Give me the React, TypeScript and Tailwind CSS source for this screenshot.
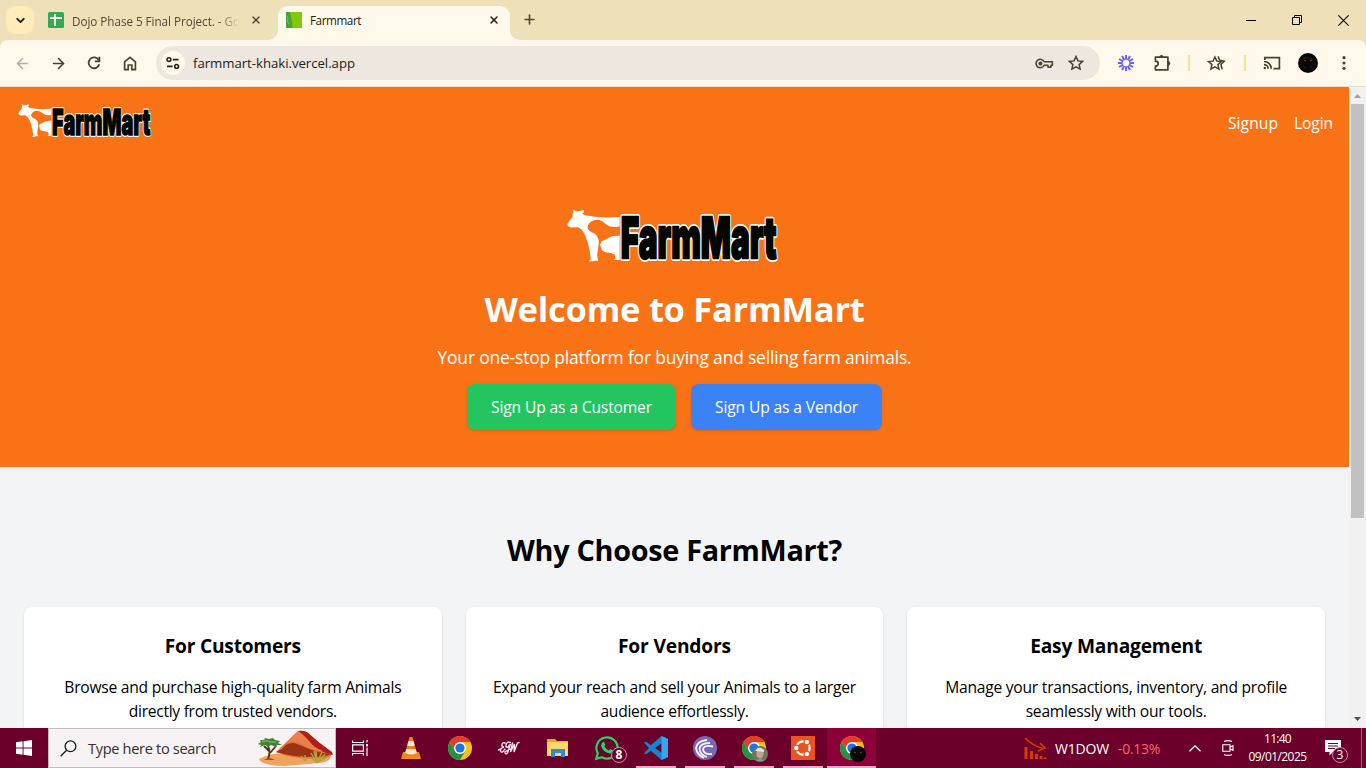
import React, { useLayoutEffect, useRef, useState } from "react";
import { ChevronDown, X, Plus, ArrowLeft, ArrowRight } from "lucide-react";

/* Single line of text whose tracking is adjusted so that it spans `w` pixels. */
function Line({ children, w, className = "" }: { children: string; w: number; className?: string }) {
  const ref = useRef<HTMLSpanElement>(null);
  const [spacing, setSpacing] = useState(0);
  useLayoutEffect(() => {
    if (ref.current) {
      const natural = ref.current.getBoundingClientRect().width;
      setSpacing((w - natural) / children.length);
    }
  }, [w, children]);
  return (
    <span ref={ref} className={`inline-block whitespace-nowrap ${className}`} style={{ letterSpacing: spacing }}>
      {children}
    </span>
  );
}

function Logo({ className }: { className: string }) {
  return (
    <svg viewBox="45 38 642 166" className={`overflow-visible ${className}`}>
      <g fill="#fffdfa">
        <path d="M66 42 L72 48 L84 47 L97 43 L97 50 L92 56 L101 60 Q130 66 160 67 L205 65 V93 Q180 100 165 88 Q145 68 125 76 Q108 84 108 98 Q112 108 128 114 Q142 124 142 142 Q140 165 137 180 L140 197 H128 L126 199 H112 L118 192 L114 165 Q108 135 98 115 Q90 100 80 96 L58 97 L48 92 V84 L62 66 Z" />
        <path d="M205 122 Q180 120 165 132 L150 138 L146 150 L152 166 Q160 173 175 173 L190 178 L192 190 L186 195 H205 Z" />
      </g>
      <g fontFamily="Inter, 'Liberation Sans', sans-serif" fontWeight="900" fontSize="170" strokeLinejoin="round">
        <text x="208" y="190" textLength="471" lengthAdjust="spacingAndGlyphs" fill="#fff" stroke="#fffdf8" strokeWidth="18">FarmMart</text>
        <text x="208" y="190" textLength="471" lengthAdjust="spacingAndGlyphs" fill="#030500" stroke="#030500" strokeWidth="7" strokeLinejoin="miter">FarmMart</text>
      </g>
    </svg>
  );
}

function Chrome() {
  return (
    <svg viewBox="0 0 24 24" className="size-6">
      <circle cx="12" cy="12" r="12" fill="#fbc116" />
      <path d="M1.6 6A12 12 0 0 1 22.4 6H12L6.8 15Z" fill="#e33b2e" />
      <path d="M1.6 6A12 12 0 0 0 12 24L17.2 15L12 18L6.8 15Z" fill="#229342" />
      <circle cx="12" cy="12" r="6" fill="#fff" />
      <circle cx="12" cy="12" r="4.6" fill="#1a73e8" />
    </svg>
  );
}

const star = "M12 3.5L14.6 9.2L20.8 9.9L16.2 14.1L17.4 20.2L12 17.1L6.6 20.2L7.8 14.1L3.2 9.9L9.4 9.2Z";

function TabStrip() {
  return (
    <div className="flex h-10 bg-[#eee0b9]">
      <div className="mt-[6px] ml-[6px] flex size-7 items-center justify-center rounded-[9px] bg-[#ffecb8]">
        <ChevronDown size={13} strokeWidth={3.5} color="#1e1b10" />
      </div>
      <div className="flex h-10 w-[236px] items-center pl-[14px]">
        <svg viewBox="0 0 16 16" className="size-4 shrink-0">
          <rect width="16" height="16" rx="1.5" fill="#34a853" />
          <path d="M2 6.2H14M7 2V14" stroke="#fff" strokeWidth="1.7" />
        </svg>
        <div className="ml-2 w-[168px] overflow-hidden [mask-image:linear-gradient(to_right,black_145px,transparent_168px)]">
          <Line w={168} className="text-[11.7px] text-[#514a32]">Dojo Phase 5 Final Project. - Go</Line>
        </div>
        <X size={12} strokeWidth={2.7} color="#49442f" className="ml-[10px] shrink-0" />
      </div>
      <div className="relative mt-[6px] ml-[8px] flex h-[34px] w-[232px] items-center rounded-t-[10px] bg-[#fff8eb] pb-[5px] pl-2">
        <svg viewBox="0 0 10 10" className="absolute bottom-0 -left-[10px] size-[10px]"><path d="M10 0V10H0A10 10 0 0 0 10 0Z" fill="#fff8eb" /></svg>
        <svg viewBox="0 0 10 10" className="absolute -right-[10px] bottom-0 size-[10px]"><path d="M0 0V10H10A10 10 0 0 1 0 0Z" fill="#fff8eb" /></svg>
        <svg viewBox="0 0 16 16" className="mt-[-1px] size-4">
          <rect width="16" height="16" fill="#83c90b" />
          <path d="M0 0H4L6 10L6.5 16H0Z" fill="#48a52c" />
          <path d="M1 4L2 7L1 9L3 12" stroke="#7fc368" strokeWidth=".8" fill="none" />
        </svg>
        <Line w={51} className="ml-2 text-[11.7px] text-[#211e14]">Farmmart</Line>
        <X size={12} strokeWidth={2.9} color="#211e14" className="mt-[-1px] mr-[10px] ml-auto" />
      </div>
      <Plus size={15} strokeWidth={2.6} color="#514a32" className="mt-[12px] ml-[12px]" />
      <div className="ml-auto flex h-10">
        <div className="flex w-[46px] items-center justify-center"><svg viewBox="0 0 10 10" className="size-[10px]"><path d="M0 5.5H10" stroke="#000" /></svg></div>
        <div className="flex w-[46px] items-center justify-center">
          <svg viewBox="0 0 10 10" className="size-[10px]" fill="none" stroke="#000"><path d="M.5 2.5H7.5V9.5H.5Z" /><path d="M2.5 2.5V.5H9.5V7.5H7.5" /></svg>
        </div>
        <div className="flex w-[46px] items-center justify-center"><svg viewBox="0 0 10 10" className="size-[11px]"><path d="M.3 .3L9.7 9.7M9.7 .3L.3 9.7" stroke="#000" /></svg></div>
      </div>
    </div>
  );
}

const slot = "flex w-9 shrink-0 items-center justify-center";

function Toolbar() {
  return (
    <div className="bg-[#eee0b9]">
      <div className="flex h-[47px] items-center rounded-t-[8px] border-b border-[#e3ddd2] bg-[#fff8eb] pl-1">
        <div className={slot}><ArrowLeft size={17} strokeWidth={2.3} color="#b3aea1" /></div>
        <div className={slot}><ArrowRight size={17} strokeWidth={2.3} color="#49432e" /></div>
        <div className={slot}>
          <svg viewBox="0 0 14 14" className="size-[14px]" fill="none" stroke="#49432e" strokeWidth="1.8"><path d="M11.8 4.2A5.4 5.4 0 1 0 12.3 8.2" /><path d="M12.4 .8V5.3H7.8" /></svg>
        </div>
        <div className={slot}>
          <svg viewBox="0 0 14 15" className="h-[15px] w-[14px]" fill="none" stroke="#49432e" strokeWidth="1.7"><path d="M1.6 5.8L7 1.4L12.4 5.8V13.6H8.8V9H5.2V13.6H1.6Z" /></svg>
        </div>
        <div className="ml-2 flex h-[34px] w-[944px] items-center rounded-full bg-[#eee7e0] pl-[5px]">
          <div className="flex size-6 items-center justify-center rounded-full bg-[#fff8eb]">
            <svg viewBox="0 0 14 14" className="size-[14px]" fill="none" stroke="#282419" strokeWidth="1.6"><circle cx="3" cy="3.6" r="1.9" /><path d="M6.8 3.6H12.6M1 10.4H6.6" /><circle cx="10.6" cy="10.4" r="1.9" /></svg>
          </div>
          <Line w={162} className="ml-2 pt-[2px] text-[13.2px] text-[#211e18]">farmmart-khaki.vercel.app</Line>
          <div className="mr-2 ml-auto flex">
            <div className="flex w-8 items-center justify-center">
              <svg viewBox="0 0 20 12" className="h-[11px] w-[19px]" fill="none" stroke="#49432e" strokeWidth="1.7"><path d="M9.6 4.1A4.6 4.6 0 1 0 9.6 7.9H13.8V10H17V7.9H18.6V4.1Z" strokeLinejoin="round" /><circle cx="5.6" cy="6" r="1.4" fill="#49432e" /></svg>
            </div>
            <div className="flex w-8 items-center justify-center">
              <svg viewBox="0 0 24 24" className="mt-[-1px] size-[18px]" fill="none" stroke="#49432e" strokeWidth="2"><path d={star} /></svg>
            </div>
          </div>
        </div>
        <div className={`${slot} ml-2`}>
          <svg viewBox="-8 -8 16 16" className="size-4" stroke="#6761f5" strokeWidth="2">
            {[0, 30, 60, 90, 120, 150, 180, 210, 240, 270, 300, 330].map((a) => (
              <path key={a} d="M0 -3.3V-8" transform={`rotate(${a})`} />
            ))}
          </svg>
        </div>
        <div className={slot}>
          <svg viewBox="0 0 18 18" className="size-[18px]" fill="none" stroke="#49432e" strokeWidth="1.7" strokeLinejoin="round">
            <path d="M2.4 3.2H14.9V15.8H2.4V12.2C4.4 12.2 5.2 11 5.2 9.6S4.4 7.2 2.4 7.2Z" />
            <path d="M7 2.8A1.6 1.6 0 0 1 10 2.8ZM15.2 7.9A1.6 1.6 0 0 1 15.2 11Z" fill="#49432e" />
          </svg>
        </div>
        <div className="flex w-[18px] justify-center"><div className="h-4 w-[2px] bg-[#fbe184]" /></div>
        <div className={slot}>
          <svg viewBox="0 0 24 24" className="size-[19px]" fill="none" stroke="#49432e" strokeWidth="1.9">
            <path d="M10 3.8L12.4 9L18 9.6L13.8 13.4L15 19L10 16.2L5 19L6.2 13.4L2 9.6L7.6 9Z" /><path d="M14 3L16 7.8L21.8 9L17.6 13.2L19.2 19.5" />
          </svg>
        </div>
        <div className="ml-[2px] flex w-[18px] justify-center"><div className="h-4 w-[2px] bg-[#fbe184]" /></div>
        <div className={slot}>
          <svg viewBox="0 0 18 14" className="h-[14px] w-[18px]" fill="none" stroke="#49432e" strokeWidth="1.7"><path d="M1.8 4V1.6H16.4V12.6H10.5M1 5.5A7.3 7.3 0 0 1 8.3 12.8M1 8.7A4.1 4.1 0 0 1 5.1 12.8" /><circle cx="1.8" cy="12" r="1.2" fill="#49432e" stroke="none" /></svg>
        </div>
        <div className={slot}>
          <svg viewBox="0 0 20 20" className="size-5"><circle cx="10" cy="10" r="10" fill="#080808" /><path d="M5 6Q10 3 15 7M5 13L8 15M12 12L14 15" stroke="#262626" fill="none" /><path d="M6 7L8 8M12 8L14 7" stroke="#8b4b12" /></svg>
        </div>
        <div className={slot}>
          <svg viewBox="0 0 4 16" className="h-4 w-1" fill="#49432e"><circle cx="2" cy="2.7" r="1.6" /><circle cx="2" cy="8" r="1.6" /><circle cx="2" cy="13.3" r="1.6" /></svg>
        </div>
      </div>
    </div>
  );
}

const cards = [
  { title: "For Customers", tw: 136, lines: [["Browse and purchase high-quality farm Animals", 337], ["directly from trusted vendors.", 208]] },
  { title: "For Vendors", tw: 113, lines: [["Expand your reach and sell your Animals to a larger", 363], ["audience effortlessly.", 148]] },
  { title: "Easy Management", tw: 172, lines: [["Manage your transactions, inventory, and profile", 342], ["seamlessly with our tools.", 181]] },
] as { title: string; tw: number; lines: [string, number][] }[];

function Page() {
  return (
    <div className="h-[641px] w-[1349px] overflow-hidden bg-[#f3f4f6]">
      <header className="h-[380px] bg-[#f97316] text-white">
        <nav className="flex h-[73px] items-center justify-between pr-4 pl-[18px]">
          <Logo className="mt-[-6px] h-[35px] w-[134px]" />
          <div className="mt-[-2px] flex gap-4 text-[15.6px] leading-6">
            <Line w={50}>Signup</Line>
            <Line w={39}>Login</Line>
          </div>
        </nav>
        <div className="flex flex-col items-center pt-[48px]">
          <Logo className="mr-[4px] h-[55px] w-[214px]" />
          <h1 className="mt-[26px] text-[34.5px] leading-10 font-bold"><Line w={380}>Welcome to FarmMart</Line></h1>
          <p className="mt-[14px] text-[17.4px] leading-7"><Line w={474}>Your one-stop platform for buying and selling farm animals.</Line></p>
          <div className="mt-[13px] flex gap-[15px] text-[15.6px]">
            <button className="h-[46px] w-[209px] rounded-lg bg-[#22c55e] pt-[2px] shadow-sm"><Line w={161}>Sign Up as a Customer</Line></button>
            <button className="h-[46px] w-[191px] rounded-lg bg-[#3b82f6] pt-[2px] shadow-sm"><Line w={143}>Sign Up as a Vendor</Line></button>
          </div>
        </div>
      </header>
      <main className="px-6 pt-[65px] text-center text-black">
        <h2 className="text-[28.8px] leading-9 font-bold"><Line w={335}>Why Choose FarmMart?</Line></h2>
        <div className="mt-[39px] grid grid-cols-3 gap-6">
          {cards.map((c) => (
            <article key={c.title} className="h-[170px] rounded-lg bg-white pt-[25px] shadow-sm">
              <h3 className="text-[19.2px] leading-7 font-bold"><Line w={c.tw}>{c.title}</Line></h3>
              <div className="mt-[15px] text-[15.6px] leading-6">
                {c.lines.map(([text, w]) => (
                  <div key={text} className="h-6"><Line w={w}>{text}</Line></div>
                ))}
              </div>
            </article>
          ))}
        </div>
      </main>
    </div>
  );
}

function Scrollbar() {
  return (
    <div className="flex h-[641px] w-[17px] flex-col items-center bg-[#f1f1f1]">
      <svg viewBox="0 0 17 17" className="size-[17px]"><path d="M5 11H12L8.5 7Z" fill="#a3a3a3" /></svg>
      <div className="h-[414px] w-[13px] bg-[#c1c1c1]" />
      <svg viewBox="0 0 17 17" className="mt-auto size-[17px]"><path d="M5 6H12L8.5 10Z" fill="#505050" /></svg>
    </div>
  );
}

function TaskButton({ children, open, active }: { children: React.ReactNode; open?: boolean; active?: boolean }) {
  return (
    <div className={`relative flex h-10 w-[49px] shrink-0 items-center justify-center ${active ? "bg-[#8c0039]" : ""}`}>
      {children}
      {open && <div className={`absolute bottom-0 h-[2px] bg-[#ffa3cc] ${active ? "w-full" : "w-10"}`} />}
    </div>
  );
}

function Desert() {
  return (
    <svg viewBox="0 0 77 36" className="h-9 w-[77px]">
      <path d="M3 29Q14 23 28 23L74 25Q77 31 64 33L28 36Q4 35 3 29Z" fill="#f0a35b" />
      <path d="M20 22L42 1Q44 0 50 2L76 24Q74 29 60 29Q35 29 20 22Z" fill="#e4713b" />
      <path d="M42 1Q46 0 51 2Q63 13 76 22L77 25Q64 22 56 15Q50 6 42 1Z" fill="#b31c18" />
      <path d="M26 19Q31 12 38 13Q44 15 51 18Q60 22 75 24Q66 28 52 27Q38 27 20 22Z" fill="#9a3414" />
      <path d="M42 1L29 14Q34 10 41 12Q45 13 50 17L58 20Q62 21 67 21Q57 17 54 12Z" fill="#e9804b" />
      <path d="M12 29Q15 22 12 16M14 23L20 16M13 21L8 16" stroke="#573018" strokeWidth="1.8" fill="none" />
      <path d="M2 14L5 12L4 10L8 10L9 8L13 9L17 8L19 10L24 11L22 13L26 15L21 15L20 17L15 15L12 17L9 15L4 17L5 15Z" fill="#438334" />
      <path d="M6 12L10 10.500L14 12L20 12" stroke="#73af48" strokeWidth="1.5" fill="none" />
      <path d="M61 33L54 27M61 33L55 23M61 33L60 20M61 33L66 22M61 33L71 27M61 33L58 21M61 33L69 24M49 31L45 26M49 31V25M49 31L53 27" stroke="#b5a53c" strokeWidth="1.4" />
      <path d="M8 30Q13 26 19 30Z" fill="#a95125" />
    </svg>
  );
}

function Taskbar() {
  return (
    <div className="flex h-10 w-full bg-[#6b002b] text-white">
      <div className="flex w-12 items-center justify-center">
        <svg viewBox="0 0 16 16" className="size-4" fill="#fff"><path d="M0 2.2L6.6 1.3V7.5H0ZM7.5 1.2L16 0V7.5H7.5ZM0 8.4H6.6V14.7L0 13.8ZM7.5 8.4H16V16L7.5 14.8Z" /></svg>
      </div>
      <div className="flex w-72 items-center border border-[#c3b9be] bg-[#f7f2f4] pl-[11px]">
        <svg viewBox="0 0 17 17" className="size-[17px]" fill="none" stroke="#1b1b1b" strokeWidth="1.3"><circle cx="10.5" cy="6.3" r="5.4" /><path d="M6.6 10.3L.6 16.3" /></svg>
        <Line w={128} className="ml-[11px] pt-[2px] text-[14.6px] text-[#303030]">Type here to search</Line>
        <div className="mr-[2px] ml-auto"><Desert /></div>
      </div>
      <div className="flex w-[50px] items-center justify-center pr-[2px]">
        <svg viewBox="0 0 17 16" className="h-4 w-[17px]" fill="none" stroke="#fff" strokeWidth="1.2"><path d="M.6 .5V2.5H11.4V.5M.6 4.8H11.4V11.2H.6ZM.6 15.5V13.5H11.4V15.5M15 0V2.5M15 7.5V16" /><rect x="14" y="4" width="2" height="2.4" fill="#fff" stroke="none" /></svg>
      </div>
      <TaskButton>
        <svg viewBox="0 0 22 24" className="h-6 w-[22px]"><path d="M3 16H19L21 23H1Z" fill="#f28b0c" /><path d="M9.5 1H12.5L17 18Q11 22 5 18Z" fill="#f47c08" /><path d="M8.4 5H13.6L14.8 9.5Q11 11 7.2 9.5ZM6.2 13H15.8L16.8 17Q11 20 5.2 17Z" fill="#eee8e1" /></svg>
      </TaskButton>
      <TaskButton><Chrome /></TaskButton>
      <TaskButton>
        <svg viewBox="0 0 22 16" className="h-4 w-[22px]" fill="none" stroke="#f3e6ed" strokeWidth="1.4" strokeLinecap="round"><path d="M7 3Q4 2 4 5Q4 7 6 7Q2 8 2.500 11Q4 14 7 9M12.500 2.500Q9 1 8 5Q7.500 8 10 7L12.500 4L9.500 13Q7 15 7 12L12 9M14.500 3L12.500 12L16.500 4L16 12L19.500 3L21 2.500M0 10L3 9" /></svg>
      </TaskButton>
      <TaskButton>
        <svg viewBox="0 0 22 20" className="mt-[-1px] h-5 w-[22px]"><path d="M0 1H8L10 3H21V18H0Z" fill="#e9a91c" /><path d="M0 4H21V18H0Z" fill="#ffd869" /><path d="M4 11H18V19H14V15H8V19H4Z" fill="#2c8bd8" /></svg>
      </TaskButton>
      <TaskButton>
        <svg viewBox="0 0 24 24" className="size-6"><path d="M1.3 22.7L2.8 17.2A10.6 10.6 0 1 1 6.8 21.2Z" fill="none" stroke="#25d366" strokeWidth="2.2" /><path d="M7.4 6.4Q8.8 5.2 9.4 6.6L10.3 8.8L9.3 10.3Q11 13.2 13.8 14.4L15.1 13L17.7 14.3Q17.8 17.4 14.7 17.5Q8 16.5 6.2 10.1Q6 7.8 7.4 6.4Z" fill="#25d366" /></svg>
        <span className="absolute top-[19px] left-[29px] flex size-4 items-center justify-center rounded-full border border-[#c88ba4] bg-[#6b002b] text-[12px] leading-none font-bold">8</span>
      </TaskButton>
      <TaskButton open>
        <svg viewBox="0 0 24 24" className="size-6"><path d="M17.5 0L24 3V21L17.5 24L6.8 14.7L2 18.4L0 17.2L5.1 12L0 6.8L2 5.6L6.8 9.3ZM17.8 7L11 12L17.8 17Z" fill="#1683d0" fillRule="evenodd" /><path d="M17.5 0L24 3V21L17.5 24Z" fill="#36a5ed" /></svg>
      </TaskButton>
      <TaskButton open>
        <svg viewBox="0 0 24 24" className="size-6"><circle cx="12" cy="12" r="12" fill="#7569b3" /><g fill="none" stroke="#f8f4fb" strokeWidth="1.8"><path d="M14 4Q4 5 3 12Q4 19 11 22" /><path d="M17 7Q7 7 6.5 13Q7 19 14 21" /><path d="M20 10.5Q10.500 8.500 10 13.5Q11 19 19 18" /></g></svg>
      </TaskButton>
      <TaskButton open>
        <Chrome />
        <svg viewBox="0 0 16 16" className="absolute top-[18px] left-[23px] size-4"><circle cx="8" cy="8" r="8" fill="#6f7664" /><ellipse cx="8" cy="7.5" rx="3.6" ry="5" fill="#c2a38e" /><path d="M3 5Q7 -1 12 4L12 6L4 5Z" fill="#e4e2df" /><path d="M4 15Q8 10 12 15" fill="#8d948c" /></svg>
      </TaskButton>
      <TaskButton open>
        <svg viewBox="0 0 24 24" className="size-6"><rect width="24" height="24" fill="#e95420" /><circle cx="12" cy="12" r="6.7" fill="none" stroke="#fff" strokeWidth="2.2" /><g fill="#fff" stroke="#e95420" strokeWidth="1.2"><circle cx="5.2" cy="12" r="2.8" /><circle cx="15.8" cy="6" r="2.8" /><circle cx="15.8" cy="18" r="2.8" /></g></svg>
      </TaskButton>
      <TaskButton open active>
        <Chrome />
        <svg viewBox="0 0 16 16" className="absolute top-[18px] left-[23px] size-4"><circle cx="8" cy="8" r="8" fill="#080808" /><path d="M4 6L6 7M10 7L12 6" stroke="#70431b" /></svg>
      </TaskButton>
      <div className="ml-auto flex items-center">
        <svg viewBox="0 0 23 23" className="size-[23px]" fill="none" stroke="#d83b01" strokeWidth="2"><path d="M1 1Q9 9 18 11M16 6L21 11L14 14" strokeWidth="1.7" /><path d="M2 10V22M7.500 14V22M12.500 17V22M17 19V22M21 20.500V22" strokeWidth="3" /></svg>
        <Line w={54} className="ml-[8px] text-[14px]">W1DOW</Line>
        <Line w={42} className="ml-[9px] text-[14px] text-[#ff5f6b]">-0.13%</Line>
        <svg viewBox="0 0 12 7" className="ml-[29px] h-[7px] w-3" fill="none" stroke="#fff" strokeWidth="1.3"><path d="M.5 6.3L6 .9L11.5 6.3" /></svg>
        <svg viewBox="0 0 12 16" className="ml-[21px] h-4 w-3" fill="none" stroke="#fff" strokeWidth="1.1"><path d="M.8 4.8H8V11.2H.8ZM8 7.2L11 5.6V10.4L8 8.8M2 1.6Q6 -.4 10 1.6M2 14.4Q6 16.4 10 14.4" /></svg>
        <div className="ml-[14px] flex w-[59px] flex-col items-center text-[12px] leading-[18px]">
          <Line w={27}>11:40</Line>
          <Line w={58}>09/01/2025</Line>
        </div>
        <div className="relative ml-[18px] size-4">
          <svg viewBox="0 0 16 16" className="size-4"><path d="M0 0H16V12H8L4.5 15.5V12H0Z" fill="#fff" /><path d="M3 3.5H13M3 6H13M3 8.5H10" stroke="#6b002b" /></svg>
          <span className="absolute top-[7px] left-[7px] flex size-4 items-center justify-center rounded-full border border-[#c88ba4] bg-[#6b002b] text-[12px] leading-none">3</span>
        </div>
        <div className="mr-1 ml-5 h-10 w-px bg-[#a35f7b]" />
      </div>
    </div>
  );
}

export default function App() {
  return (
    <div className="h-[768px] w-[1366px] overflow-hidden font-['Open_Sans','Noto_Sans',sans-serif]">
      <TabStrip />
      <Toolbar />
      <div className="flex">
        <Page />
        <Scrollbar />
      </div>
      <Taskbar />
    </div>
  );
}
